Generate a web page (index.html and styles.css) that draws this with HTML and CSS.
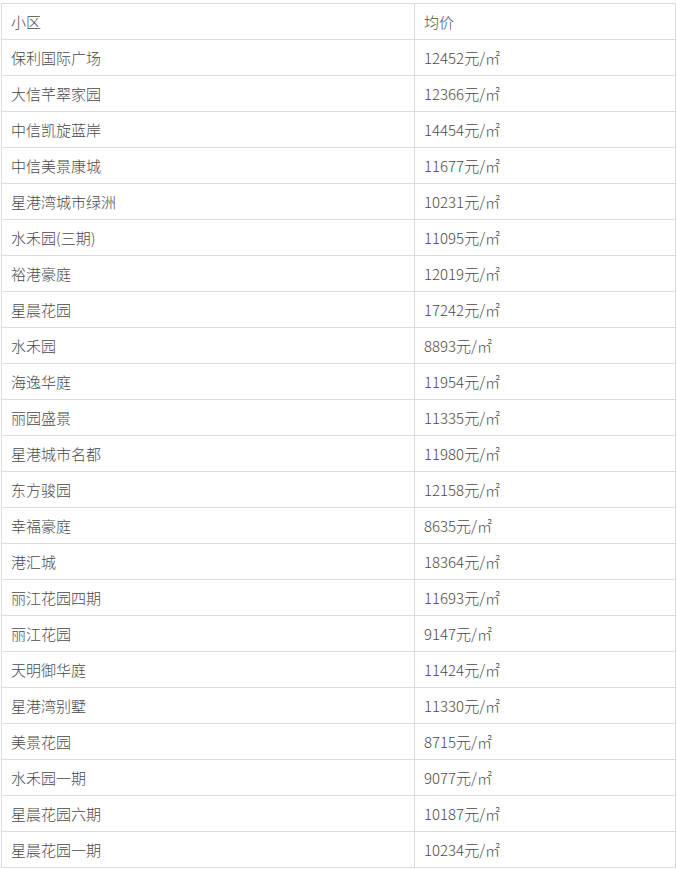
FILE: index.html
```html
<!DOCTYPE html>
<html lang="zh-CN">
<head>
<meta charset="utf-8">
<link rel="stylesheet" href="styles.css">
</head>
<body>
<table class="price-table">
<tr><td class="name">小区</td><td class="price">均价</td></tr>
<tr><td class="name">保利国际广场</td><td class="price">12452元/㎡</td></tr>
<tr><td class="name">大信芊翠家园</td><td class="price">12366元/㎡</td></tr>
<tr><td class="name">中信凯旋蓝岸</td><td class="price">14454元/㎡</td></tr>
<tr><td class="name">中信美景康城</td><td class="price">11677元/㎡</td></tr>
<tr><td class="name">星港湾城市绿洲</td><td class="price">10231元/㎡</td></tr>
<tr><td class="name">水禾园(三期)</td><td class="price">11095元/㎡</td></tr>
<tr><td class="name">裕港豪庭</td><td class="price">12019元/㎡</td></tr>
<tr><td class="name">星晨花园</td><td class="price">17242元/㎡</td></tr>
<tr><td class="name">水禾园</td><td class="price">8893元/㎡</td></tr>
<tr><td class="name">海逸华庭</td><td class="price">11954元/㎡</td></tr>
<tr><td class="name">丽园盛景</td><td class="price">11335元/㎡</td></tr>
<tr><td class="name">星港城市名都</td><td class="price">11980元/㎡</td></tr>
<tr><td class="name">东方骏园</td><td class="price">12158元/㎡</td></tr>
<tr><td class="name">幸福豪庭</td><td class="price">8635元/㎡</td></tr>
<tr><td class="name">港汇城</td><td class="price">18364元/㎡</td></tr>
<tr><td class="name">丽江花园四期</td><td class="price">11693元/㎡</td></tr>
<tr><td class="name">丽江花园</td><td class="price">9147元/㎡</td></tr>
<tr><td class="name">天明御华庭</td><td class="price">11424元/㎡</td></tr>
<tr><td class="name">星港湾别墅</td><td class="price">11330元/㎡</td></tr>
<tr><td class="name">美景花园</td><td class="price">8715元/㎡</td></tr>
<tr><td class="name">水禾园一期</td><td class="price">9077元/㎡</td></tr>
<tr><td class="name">星晨花园六期</td><td class="price">10187元/㎡</td></tr>
<tr><td class="name">星晨花园一期</td><td class="price">10234元/㎡</td></tr>
</table>
</body>
</html>
```

FILE: styles.css
```css
html, body {
  margin: 0;
  padding: 0;
  background: #ffffff;
}
body {
  padding: 3px 0 0 1px;
}
.price-table {
  border-collapse: collapse;
  width: 675px;
  table-layout: fixed;
  font-family: "Noto Sans CJK SC", "Liberation Sans", sans-serif;
  font-size: 15px;
  font-weight: 300;
  color: #4a4a4a;
}
.price-table td {
  border: 1px solid #dcdcdc;
  height: 36px;
  padding: 0 0 0 9px;
  box-sizing: border-box;
  vertical-align: middle;
  line-height: 20px;
  white-space: nowrap;
}
.price-table td.name {
  width: 413px;
}
```
